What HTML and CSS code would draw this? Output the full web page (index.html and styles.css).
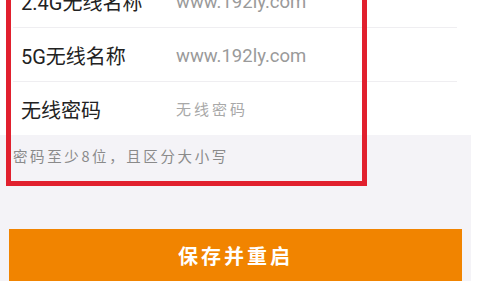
FILE: index.html
```html
<!DOCTYPE html>
<html lang="zh-CN">
<head>
    <meta charset="UTF-8">
    <meta name="viewport" content="width=device-width, initial-scale=1.0">
    <title>无线设置</title>
    <link rel="stylesheet" href="styles.css">
</head>
<body>
    <div class="page">
        <div class="fields">
            <div class="row">
                <span class="label">2.4G无线名称</span>
                <span class="value">www.192ly.com</span>
            </div>
            <div class="row">
                <span class="label">5G无线名称</span>
                <span class="value">www.192ly.com</span>
            </div>
            <div class="row">
                <span class="label">无线密码</span>
                <input class="pwd" type="text" placeholder="无线密码">
            </div>
        </div>
        <div class="panel">
            <p class="tip">密码至少8位，且区分大小写</p>
            <button class="save">保存并重启</button>
        </div>
        <div class="mark"></div>
    </div>
</body>
</html>
```

FILE: styles.css
```css
body {
    margin: 0;
    background: #fff;
    font-family: Roboto, "Noto Sans CJK SC", sans-serif;
    overflow: hidden;
}
.page {
    position: relative;
    display: flow-root;
    width: 471px;
}
.fields {
    margin-top: -26px;
}
.row {
    display: flex;
    align-items: center;
    height: 53px;
    margin-left: 13px;
    margin-right: 14px;
    padding-left: 8px;
    border-bottom: 1px solid #efeef1;
}
.row:last-child {
    border-bottom: none;
    height: 53px;
}
.label {
    width: 155px;
    font-size: 20px;
    color: #222;
    padding-top: 2px;
}
.value {
    font-size: 18.5px;
    color: #9a9a9a;
    padding-top: 2px;
}
.pwd {
    border: none;
    outline: none;
    padding: 0;
    margin: 0;
    width: 200px;
    font-family: "Noto Sans CJK SC", sans-serif;
    font-size: 15px;
    letter-spacing: 3px;
    color: #999;
    background: transparent;
}
.pwd::placeholder {
    color: #a8a8a8;
}
.panel {
    background: #f4f3f7;
    padding: 11px 9px 0 9px;
}
.tip {
    margin: 0 0 0 4px;
    font-family: "Noto Sans CJK SC", sans-serif;
    font-size: 14.5px;
    line-height: 20px;
    letter-spacing: 2.6px;
    color: #8a8a8a;
}
.save {
    display: block;
    width: 100%;
    height: 52px;
    margin-top: 63px;
    border: none;
    background: #f18400;
    color: #fff;
    font-family: "Noto Sans CJK SC", sans-serif;
    font-size: 20px;
    font-weight: bold;
    letter-spacing: 3px;
}
.mark {
    position: absolute;
    left: 6px;
    top: -20px;
    width: 351px;
    height: 196px;
    border: 5px solid #e1202e;
}
```
